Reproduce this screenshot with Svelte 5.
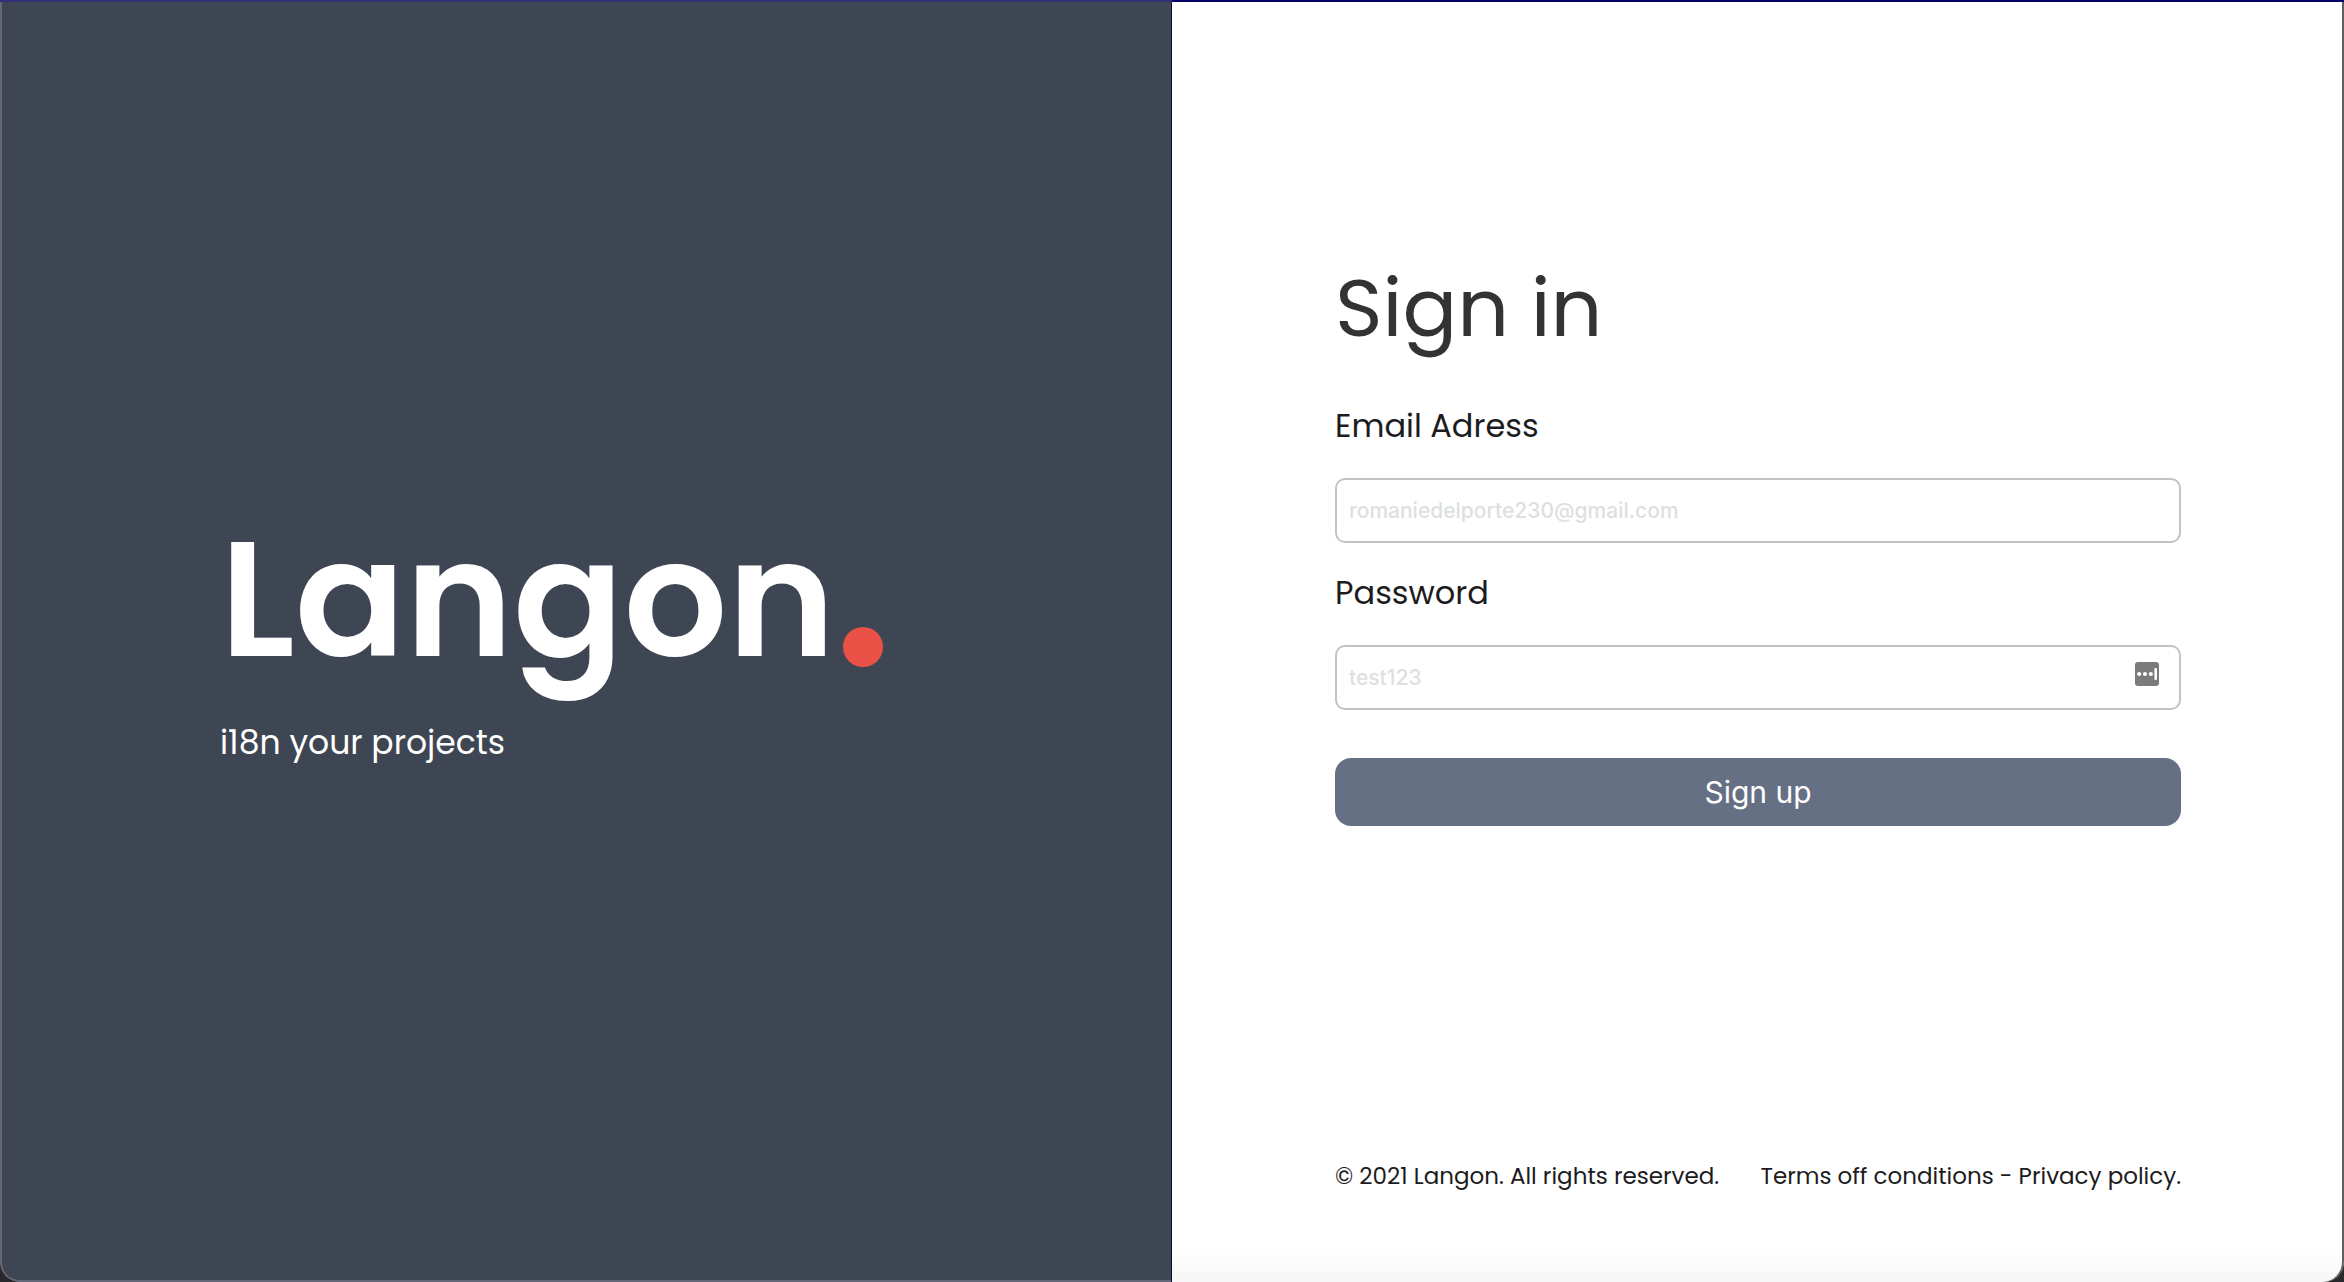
<script>
  let email = $state('');
  let password = $state('');
</script>

<div class="window">
  <main class="screen">
    <section class="brand">
      <div class="brand-block">
        <h1 class="logo">Langon<span class="dot"></span></h1>
        <p class="tagline">i18n your projects</p>
      </div>
    </section>

    <section class="panel">
      <form class="form" onsubmit={(e) => e.preventDefault()}>
        <h2 class="title">Sign in</h2>

        <label class="label" for="email">Email Adress</label>
        <div class="field">
          <input id="email" type="email" placeholder="romaniedelporte230@gmail.com" bind:value={email} />
        </div>

        <label class="label" for="password">Password</label>
        <div class="field">
          <input id="password" type="password" placeholder="test123" bind:value={password} />
          <button class="reveal" type="button" aria-label="Fill password">
            <svg viewBox="0 0 24 24" aria-hidden="true">
              <rect width="24" height="24" rx="3" fill="#7b7b7b" />
              <circle cx="4.2" cy="12" r="2.1" fill="#fff" />
              <circle cx="10" cy="12" r="2.1" fill="#fff" />
              <circle cx="15.8" cy="12" r="2.1" fill="#fff" />
              <rect x="19.4" y="6" width="2.6" height="12" rx="1" fill="#fff" />
            </svg>
          </button>
        </div>

        <button class="submit" type="submit">Sign up</button>
      </form>

      <footer class="footer">
        <span>© 2021 Langon. All rights reserved.</span>
        <span><a href="#terms">Terms off conditions</a> - <a href="#privacy">Privacy policy.</a></span>
      </footer>
    </section>
  </main>
</div>

<style>
  :global(body) {
    margin: 0;
    background: #2b2b2e;
  }

  .window,
  .window * {
    box-sizing: border-box;
  }

  .window {
    min-height: 100vh;
    display: flex;
    background: #29292b;
    font-family: Poppins, Inter, 'Open Sans', sans-serif;
  }

  .screen {
    flex: 1;
    display: grid;
    grid-template-columns: 1fr 1fr;
    overflow: hidden;
    border-radius: 0 0 20px 20px;
  }

  .brand {
    display: flex;
    align-items: center;
    padding: 0 4% 0 220px;
    background: #3f4653;
    color: #fff;
    box-shadow:
      inset 0 2px #35307a,
      inset 2px 0 #66676c,
      inset -1px 0 #0d0d2e,
      inset 0 -2px #62687a;
    border-bottom-left-radius: 20px;
  }

  .brand-block {
    padding-bottom: 16px;
  }

  .logo {
    display: flex;
    align-items: baseline;
    gap: 8px;
    margin: 0 0 20px;
    font-size: 163px;
    line-height: 200px;
    font-weight: 600;
  }

  .dot {
    align-self: flex-end;
    width: 40px;
    height: 40px;
    margin-bottom: 32px;
    border-radius: 50%;
    background: #e95147;
  }

  .tagline {
    margin: 0;
    font-size: 33px;
    line-height: 48px;
  }

  .panel {
    display: flex;
    flex-direction: column;
    justify-content: space-between;
    padding: 248px 163px 90px;
    background: linear-gradient(to top, #f6f6f6, #fff 32px);
    box-shadow:
      inset 0 2px #04046c,
      inset -2px 0 #606060;
    border-bottom-right-radius: 20px;
    color: #1c1c1e;
  }

  .form {
    display: flex;
    flex-direction: column;
  }

  .title {
    margin: 0 0 34px;
    color: #333;
    font-size: 81px;
    line-height: 120px;
    font-weight: 400;
  }

  .label {
    margin-bottom: 28px;
    font-size: 32px;
    line-height: 48px;
  }

  .field {
    display: flex;
    align-items: center;
    height: 65px;
    margin-bottom: 26px;
    padding: 0 20px 0 12px;
    border: 2px solid #bfc4c6;
    border-radius: 10px;
    background: #fff;
  }

  .field:focus-within {
    border-color: #667084;
  }

  .field input {
    flex: 1;
    min-width: 0;
    padding: 0;
    border: 0;
    outline: 0;
    background: transparent;
    color: #333;
    font-family: Inter, sans-serif;
    font-size: 21px;
    font-weight: 500;
    line-height: 28px;
  }

  .field input::placeholder {
    color: #dde0e1;
    opacity: 1;
  }

  .reveal {
    padding: 0;
    margin-bottom: 8px;
    border: 0;
    background: none;
    cursor: pointer;
  }

  .reveal svg {
    display: block;
    width: 24px;
    height: 24px;
  }

  .submit {
    height: 68px;
    margin-top: 22px;
    border: 0;
    border-radius: 16px;
    background: #667084;
    color: #fff;
    font-family: Inter, sans-serif;
    font-size: 30px;
    cursor: pointer;
  }

  .footer {
    display: flex;
    justify-content: space-between;
    gap: 24px;
    font-size: 23px;
    line-height: 32px;
    white-space: nowrap;
  }

  .footer a {
    color: inherit;
    text-decoration: none;
  }
</style>
